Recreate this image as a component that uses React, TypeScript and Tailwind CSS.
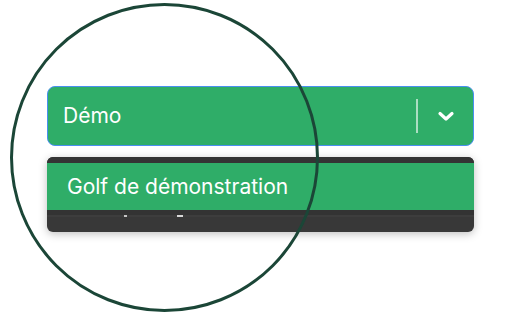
import React from 'react';

const ChevronDown: React.FC = () => (
    <svg width="18" height="12" viewBox="0 0 18 12" fill="none">
        <path d="M3 3.5 L9 9 L15 3.5" stroke="white" strokeWidth="3.2" strokeLinecap="round" strokeLinejoin="round" />
    </svg>
);

const App: React.FC = () => {
    return (
        <div
            className="relative w-[524px] h-[316px] bg-white overflow-hidden"
            style={{ fontFamily: 'Inter, "Noto Sans", sans-serif' }}
        >
            <div className="pt-[86px] pl-[47px] w-[474px]">
                {/* select control */}
                <div className="flex items-center h-[60px] rounded-lg border border-[#4a8ff0] bg-[#2fad68]">
                    <div className="flex-1 pl-[15px] text-[21px] text-white">Démo</div>
                    <div className="flex items-center h-full">
                        <span className="w-[2px] h-[34px] bg-white/60" />
                        <div className="w-[55px] flex justify-center">
                            <ChevronDown />
                        </div>
                    </div>
                </div>

                {/* menu */}
                <div className="mt-[11px] h-[75px] rounded-md bg-[#383838] shadow-[0_2px_8px_rgba(0,0,0,0.25)] overflow-hidden">
                    <div className="h-[6px] bg-[#343434]" />
                    <div className="h-[47px] bg-[#2fad68] flex items-center pl-[20px] text-[21px] text-white">
                        Golf de démonstration
                    </div>
                    <div className="h-[5px] bg-[#333333]" />
                    <div className="h-[2px] bg-[#3d3d3d] flex items-center">
                        <span className="ml-[77px] w-[3px] h-[2px] bg-white/70" />
                        <span className="ml-[50px] w-[6px] h-[2px] bg-white/80" />
                    </div>
                </div>
            </div>

            {/* highlight circle */}
            <svg className="absolute left-0 top-0" width="524" height="316" viewBox="0 0 524 316">
                <circle cx="164.5" cy="157.5" r="153" fill="none" stroke="#1b4637" strokeWidth="3" />
            </svg>
        </div>
    );
};

export default App;
